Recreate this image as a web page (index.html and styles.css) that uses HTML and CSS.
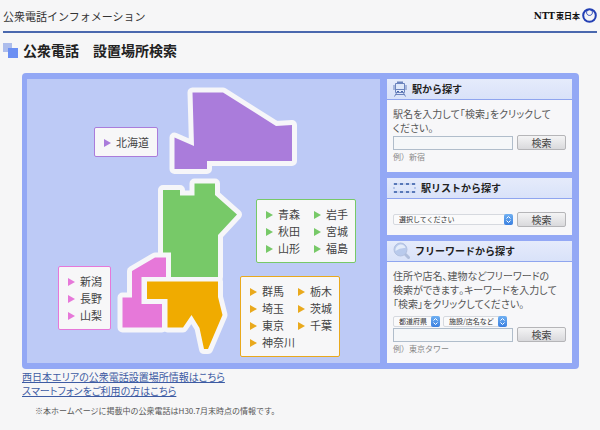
FILE: index.html
```html
<!DOCTYPE html>
<html lang="ja">
<head>
<meta charset="utf-8">
<meta name="viewport" content="width=device-width, initial-scale=1">
<title>公衆電話インフォメーション</title>
<link rel="stylesheet" href="styles.css">
</head>
<body>
<header class="site-header">
  <span class="site-name">公衆電話インフォメーション</span>
  <span class="brand">
    <span class="brand-latin">NTT</span><span class="brand-ja">東日本</span>
    <svg class="brand-mark" viewBox="0 0 15 15" aria-hidden="true">
      <circle cx="7.5" cy="7.5" r="6.3"/>
      <path d="M4.200 2.200C6 0.800 10.200 1.200 10.400 4.300C10.500 6.200 9.200 7.400 7.500 7.400S4.500 6.200 4.600 4.300C4.800 1.200 9 0.800 10.800 2.200"/>
    </svg>
  </span>
</header>

<main>
  <h1 class="page-title">
    <svg class="title-mark" viewBox="0 0 15 15" aria-hidden="true"><rect width="9" height="9" fill="#adbdec"/><rect x="5" y="5" width="10" height="10" fill="#6b8ff3"/></svg>
    公衆電話　設置場所検索
  </h1>

  <div class="finder">
    <section class="map" aria-label="エリア">
      <svg class="map-shapes" viewBox="27 79 353 284" aria-hidden="true">
        <defs>
          <path id="hokkaido" d="M192.500 92.500H223L276 126L292 125V161H207V169H174.500V137.500L194 146Z"/>
          <path id="tohoku" d="M163 190H180V195.500H194.500V183.500H215V195L237 214.500L218 235V277H171V252.500H163Z"/>
          <path id="koshin" d="M155 257.500H166V277H141.500V304H162V327.500H122.500V297.500H132V271Z"/>
          <path id="kanto" d="M147 281.500H218V297L222.500 315L208 349H204L199.500 328L191.500 315L183 327.500H167.500V299H147Z"/>
        </defs>
        <g class="coast">
          <use href="#hokkaido"/><use href="#tohoku"/><use href="#koshin"/><use href="#kanto"/>
        </g>
        <use href="#hokkaido" fill="#aa7cdb"/>
        <use href="#tohoku" fill="#77c968"/>
        <use href="#koshin" fill="#e678d9"/>
        <use href="#kanto" fill="#f0ab00"/>
      </svg>
      <ul class="area area-hokkaido">
        <li><a href="#">北海道</a></li>
      </ul>
      <ul class="area area-tohoku">
        <li><a href="#">青森</a></li><li><a href="#">岩手</a></li>
        <li><a href="#">秋田</a></li><li><a href="#">宮城</a></li>
        <li><a href="#">山形</a></li><li><a href="#">福島</a></li>
      </ul>
      <ul class="area area-koshin">
        <li><a href="#">新潟</a></li><li><a href="#">長野</a></li><li><a href="#">山梨</a></li>
      </ul>
      <ul class="area area-kanto">
        <li><a href="#">群馬</a></li><li><a href="#">栃木</a></li>
        <li><a href="#">埼玉</a></li><li><a href="#">茨城</a></li>
        <li><a href="#">東京</a></li><li><a href="#">千葉</a></li>
        <li><a href="#">神奈川</a></li>
      </ul>
    </section>

    <div class="searches">
      <form class="card">
        <h2 class="card-title">
          <svg width="14" height="16" viewBox="0 0 14 16" fill="none" stroke="#6b83bd" aria-hidden="true">
            <path d="M2.500 2.500H11.500V11.500H2.500Z" fill="#dfe8fa"/>
            <path d="M4 1.500H10" stroke-width="2"/>
            <path d="M3 8.500H11"/>
            <path d="M1 4V9M13 4V9"/>
            <path d="M4 10.500H6M8 10.500H10" stroke="#4a66a8"/>
            <path d="M3.500 12L1.500 15.500M10.500 12L12.500 15.500M2.500 13.500H11.500"/>
          </svg>
          <label for="station">駅から探す</label>
        </h2>
        <div class="card-body">
          <p class="lead">駅名を入力して「検索」をクリックして<br>ください。</p>
          <div class="row"><input class="field" id="station" type="text"><button class="go" type="button">検索</button></div>
          <p class="hint">例）新宿</p>
        </div>
      </form>

      <form class="card">
        <h2 class="card-title">
          <svg width="23" height="10" viewBox="0 0 23 10" fill="none" stroke="#5878b8" aria-hidden="true">
            <path d="M0 1H23M0 9H23" stroke="#b4c4e8" stroke-width="1"/>
            <path d="M1 1H23M1 9H23" stroke-width="2" stroke-dasharray="3 3"/>
            <path d="M0 5H2M21 5H23" stroke="#88a2db"/>
          </svg>
          <label for="station-list">駅リストから探す</label>
        </h2>
        <div class="card-body card-body-center">
          <div class="row">
            <span class="picker picker-wide">
              <select id="station-list"><option>選択してください</option></select>
              <svg class="stepper" viewBox="0 0 9 11" aria-hidden="true"><path d="M2.500 4.500L4.500 2.500L6.500 4.500M2.500 6.500L4.500 8.500L6.500 6.500"/></svg>
            </span>
            <button class="go" type="button">検索</button>
          </div>
        </div>
      </form>

      <form class="card">
        <h2 class="card-title">
          <svg width="17" height="18" viewBox="0 0 17 18" aria-hidden="true">
            <path d="M12 12L15.500 15.500" stroke="#b0bedc" stroke-width="3" stroke-linecap="round"/>
            <circle cx="7.500" cy="7.500" r="6.500" fill="#b9caec" stroke="#b3c1e0"/>
            <path d="M2.500 9Q2 4 7 2.500Q11.500 2 12.500 6Q7 5.500 2.500 9Z" fill="#e4ecfa"/>
          </svg>
          <label for="keyword">フリーワードから探す</label>
        </h2>
        <div class="card-body">
          <p class="lead">住所や店名、建物などフリーワードの<br>検索ができます。キーワードを入力して<br>「検索」をクリックしてください。</p>
          <div class="filters">
            <span class="picker">
              <select aria-label="都道府県"><option>都道府県</option></select>
              <svg class="stepper" viewBox="0 0 9 11" aria-hidden="true"><path d="M2.500 4.500L4.500 2.500L6.500 4.500M2.500 6.500L4.500 8.500L6.500 6.500"/></svg>
            </span>
            <span class="picker">
              <select aria-label="施設/店名など"><option>施設/店名など</option></select>
              <svg class="stepper" viewBox="0 0 9 11" aria-hidden="true"><path d="M2.500 4.500L4.500 2.500L6.500 4.500M2.500 6.500L4.500 8.500L6.500 6.500"/></svg>
            </span>
          </div>
          <div class="row"><input class="field" id="keyword" type="text"><button class="go" type="button">検索</button></div>
          <p class="hint">例）東京タワー</p>
        </div>
      </form>
    </div>
  </div>

  <ul class="links">
    <li><a href="#">西日本エリアの公衆電話設置場所情報はこちら</a></li>
    <li><a href="#">スマートフォンをご利用の方はこちら</a></li>
  </ul>
  <p class="note">※本ホームページに掲載中の公衆電話はH30.7月末時点の情報です。</p>
</main>
</body>
</html>
```
FILE: styles.css
```css
* {
  box-sizing: border-box;
}

body {
  margin: 0;
  padding: 0 3px;
  background: #f6f6f7;
  color: #555;
  font: 10px/14px "Noto Sans CJK JP", sans-serif;
}

h1,
h2,
p,
ul {
  margin: 0;
  padding: 0;
}

ul {
  list-style: none;
}

input,
select,
button {
  margin: 0;
  font-family: inherit;
}

.site-header {
  display: flex;
  align-items: center;
  justify-content: space-between;
  height: 33px;
  border-bottom: 2px solid #4a68ae;
}

.site-name {
  color: #333;
  font-size: 11px;
}

.brand {
  display: flex;
  align-items: center;
  color: #111;
  font-weight: 700;
}

.brand-latin {
  font-family: "DejaVu Serif", serif;
  font-size: 9px;
}

.brand-ja {
  margin: 0 2px 0 1px;
  font-size: 8px;
}

.brand-mark {
  width: 15px;
  height: 15px;
  fill: none;
  stroke: #2440b4;
  stroke-width: 2;
}

.brand-mark path {
  stroke-width: 1;
}

.page-title {
  display: flex;
  align-items: center;
  gap: 5px;
  height: 34px;
  margin-bottom: 6px;
  color: #222;
  font-size: 14px;
  font-weight: 700;
}

.title-mark {
  width: 15px;
  height: 15px;
}

.finder {
  display: grid;
  grid-template-columns: 1fr 185px;
  gap: 7px;
  margin: 0 18px 0 19px;
  padding: 6px 7px 6px 5px;
  border-radius: 4px;
  background: #93a8f5;
}

.map {
  position: relative;
  background: #bdcaf6;
}

.map-shapes {
  display: block;
  width: 353px;
  height: 284px;
}

.coast {
  fill: #f6f6f9;
  stroke: #f6f6f9;
  stroke-width: 10;
  stroke-linejoin: round;
}

.area {
  --tone: #77c968;
  position: absolute;
  display: grid;
  padding: 6px 8px 5px 9px;
  border: 1px solid var(--tone);
  border-radius: 2px;
  background: #f7f7f8;
  font-size: 11px;
  line-height: 17px;
}

.area a {
  display: flex;
  align-items: center;
  gap: 5px;
  color: #444;
  text-decoration: none;
  white-space: nowrap;
}

.area a::before {
  content: "";
  border: solid transparent;
  border-width: 4px 0 4px 7px;
  border-left-color: var(--tone);
}

.area-hokkaido {
  --tone: #aa7cdb;
  left: 67px;
  top: 48px;
}

.area-tohoku,
.area-kanto {
  width: 100px;
  grid-template-columns: 48px 1fr;
}

.area-tohoku {
  left: 229px;
  top: 120px;
}

.area-koshin {
  --tone: #e678d9;
  left: 31px;
  top: 187px;
}

.area-kanto {
  --tone: #e9a91d;
  left: 213px;
  top: 197px;
}

.searches {
  display: grid;
  grid-template-rows: 93px 57px 122px;
  gap: 6px;
}

.card {
  display: flex;
  flex-direction: column;
  background: #f7f7f9;
}

.card-title {
  display: flex;
  align-items: center;
  gap: 5px;
  height: 21px;
  padding: 0 6px;
  border-bottom: 1px solid #8fa5ef;
  background: linear-gradient(#e5ebfb, #d9e2f9);
  color: #222;
  font-size: 10px;
  font-weight: 700;
}

.card-body {
  flex: 1;
  padding: 7px 6px 0;
}

.card-body-center {
  display: grid;
  align-items: center;
  padding-top: 4px;
}

.lead {
  font-feature-settings: "palt";
  font-kerning: none;
  white-space: nowrap;
}

.row {
  display: flex;
  align-items: center;
  gap: 4px;
}

.field {
  flex: 1;
  min-width: 0;
  height: 14px;
  padding: 0 2px;
  border: 1px solid #b0bdcb;
  background: #f5f7f9;
  font-size: 10px;
}

.go {
  width: 49px;
  height: 15px;
  padding: 0;
  border: 1px solid #b5b5b8;
  border-radius: 2px;
  background: linear-gradient(#f4f4f5, #d9d9dc);
  color: #444;
  font-size: 10px;
  line-height: 13px;
}

.hint {
  color: #888;
  font-size: 8px;
}

.filters {
  display: flex;
  gap: 3px;
  margin-top: 5px;
}

.picker {
  position: relative;
  display: flex;
}

.picker-wide {
  flex: 1;
}

.picker select {
  width: 100%;
  height: 11px;
  padding: 0 12px 0 5px;
  border: 1px solid #d6d9df;
  border-radius: 2px;
  background: #fafafb;
  color: #333;
  font-size: 7px;
  line-height: 9px;
  appearance: none;
}

.stepper {
  position: absolute;
  top: 0;
  right: 0;
  width: 9px;
  height: 11px;
  border-radius: 2px;
  background: linear-gradient(#6fb0f2, #3a7fe0);
  fill: none;
  stroke: #fff;
  pointer-events: none;
}

.links {
  margin: 1px 0 6px 19px;
}

.links a {
  color: #3d5ba3;
  font-feature-settings: "palt";
  font-kerning: none;
}

.note {
  margin-left: 32px;
  font-size: 8px;
}
```
